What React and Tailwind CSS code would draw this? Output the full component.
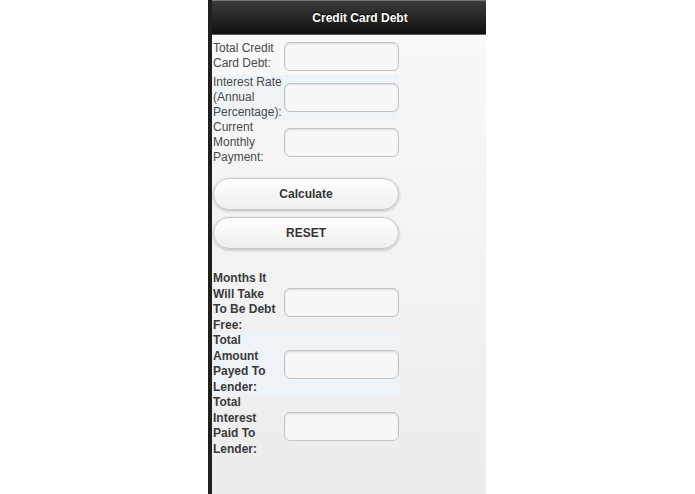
import React from 'react';

const Field = () => (
  <div className="w-[115px] h-[29px] shrink-0 rounded-[6px] border border-[#c4c4c4] bg-[#f8f8f8] shadow-[inset_0_1px_2px_rgba(0,0,0,0.12)]" />
);

const InputRow = ({ lines, shaded, bold }) => (
  <div className={`flex items-center w-[186px] ${shaded ? 'bg-[#eef3f8]' : ''}`}>
    <div
      className={`w-[71px] shrink-0 text-[12px] ${
        bold ? 'font-bold leading-[15.5px] text-[#3b3b3b]' : 'leading-[15px] text-[#4a4a4a]'
      }`}
    >
      {lines.map((l) => (
        <div key={l} className="whitespace-nowrap">
          {l}
        </div>
      ))}
    </div>
    <Field />
  </div>
);

const Button = ({ children }) => (
  <button className="w-[186px] h-[32px] rounded-[16px] border border-[#c8c8c8] bg-gradient-to-b from-[#ffffff] to-[#efefef] text-[12px] font-bold text-[#333] shadow-[0_1px_3px_rgba(0,0,0,0.25)] [text-shadow:0_1px_0_#fff]">
    {children}
  </button>
);

export default function App() {
  return (
    <div className="flex min-h-[494px] bg-white font-['Liberation_Sans',Arial,sans-serif]">
      <div className="ml-[208px] w-[278px] min-h-[494px] border-l-4 border-[#1f1f1f] bg-gradient-to-b from-[#fafafa] to-[#ececec] flex flex-col">
        <div className="h-[35px] shrink-0 flex items-center justify-center pl-[22px] border-t border-[#777] border-b border-b-[#5a5a5a] bg-gradient-to-b from-[#3c3c3c] to-[#111] text-[12px] font-bold text-white [text-shadow:0_-1px_1px_#000]">
          Credit Card Debt
        </div>
        <div className="flex flex-col pl-[1px] pt-[6px]">
          <InputRow lines={['Total Credit', 'Card Debt:']} />
          <div className="h-[4px]" />
          <InputRow lines={['Interest Rate', '(Annual', 'Percentage):']} shaded />
          <InputRow lines={['Current', 'Monthly', 'Payment:']} />
          <div className="flex flex-col gap-[7px] mt-[13px]">
            <Button>Calculate</Button>
            <Button>RESET</Button>
          </div>
          <div className="h-[22px]" />
          <InputRow lines={['Months It', 'Will Take', 'To Be Debt', 'Free:']} bold />
          <InputRow lines={['Total', 'Amount', 'Payed To', 'Lender:']} bold shaded />
          <InputRow lines={['Total', 'Interest', 'Paid To', 'Lender:']} bold />
        </div>
      </div>
    </div>
  );
}
